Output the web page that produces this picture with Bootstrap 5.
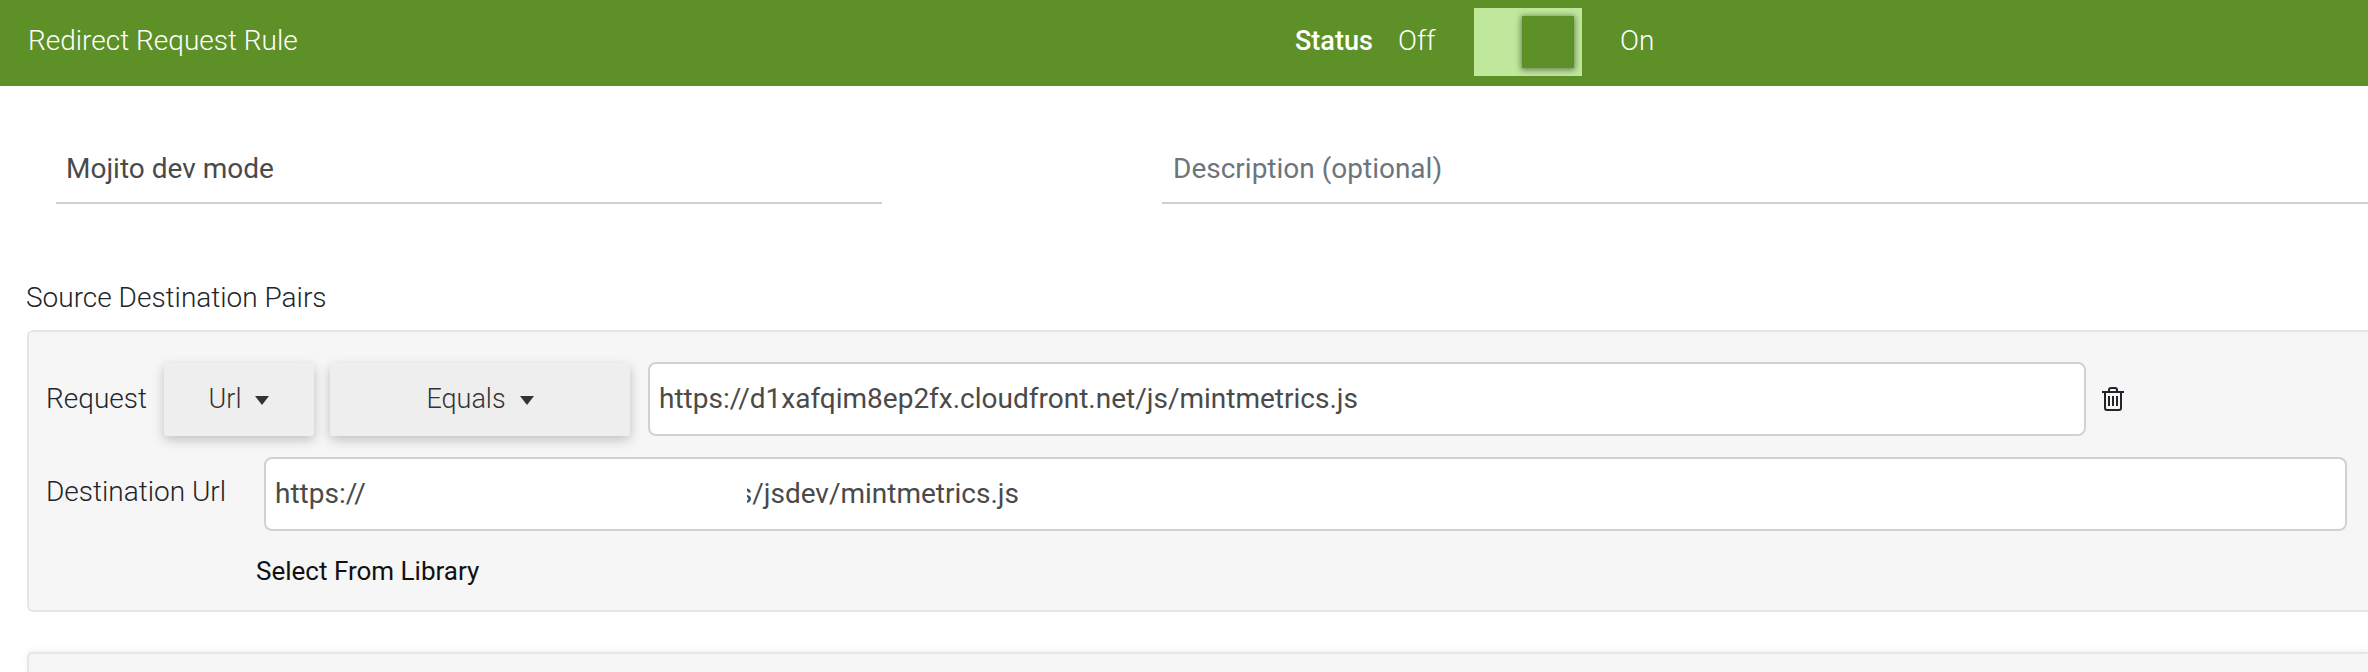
<!DOCTYPE html>
<html lang="en">
<head>
<meta charset="utf-8">
<title>Redirect Request Rule</title>
<link href="https://cdn.jsdelivr.net/npm/bootstrap@5.3.0/dist/css/bootstrap.min.css" rel="stylesheet">
<style>
html,body{height:100%;overflow:hidden}
body{font-family:Roboto,"Liberation Sans",sans-serif;background:#fff;color:#212529}
.rule-head{height:86px;background:#5e9028;color:#fff;padding:0 0 4px 28px;font-size:28px;font-weight:300}
.rule-title{width:1267px}
.rule-status{font-weight:500;width:103px;font-size:27px}
.rule-off{font-weight:300;width:76px}
.rule-on{font-weight:300;margin-left:38px}
.rule-toggle{width:108px;height:68px;background:#c0e89c;padding:8px;margin-top:2px}
.rule-knob{width:52px;height:52px;background:#5e9028;box-shadow:0 1px 6px 1px rgba(0,0,0,.45)}
.name-row{margin-top:44px;margin-left:56px}
.line-input.form-control{height:74px;border:0;border-bottom:2px solid #d0d0d2;border-radius:0;background:transparent;font-size:28px;padding:4px 10px 0;color:#4a4a4a;box-shadow:none}
.line-input::placeholder{color:#6c757d;opacity:1}
.line-name{width:826px;flex:none}
.line-desc.form-control{flex:1 1 0;width:auto;margin-left:280px;padding-left:11px}
.pairs-label{margin:74px 0 0 26px;font-size:28px;font-weight:300;line-height:39px}
.pair-card{margin:13px 0 0 27px;height:282px;background:#f6f6f6;border:2px solid #e6e6e6;border-right:0;border-radius:6px 0 0 6px;padding:29px 21px 0 17px;font-weight:300;font-size:28px}
.pair-label-a{width:118px;flex:none}
.pair-label-b{width:218px;flex:none;margin-bottom:4px}
.pair-btn.btn{height:73px;margin-top:2px;background:#eee;border:0;border-radius:3px;color:#333;font-size:27px;font-weight:300;box-shadow:0 4px 12px rgba(0,0,0,.22);padding:0}
.pair-btn.dropdown-toggle::after{margin-left:14px;border-top-width:9px;border-left-width:7px;border-right-width:7px;vertical-align:3px}
.pair-url{width:150px;flex:none}
.pair-op{width:300px;flex:none;margin-left:16px}
.pair-input.form-control{height:74px;border:2px solid #d0d1d6;border-radius:8px;background:#fff;font-size:28px;font-weight:400;color:#4a4a4a;padding:0 9px;box-shadow:none}
.pair-input-a{margin-left:18px}
.pair-trash{width:22px;flex:none;margin:0 223px 0 16px;color:#212529}
.pair-row2{margin-top:21px}
.lib-row{margin:21px 0 0 210px;font-weight:400;line-height:39px;color:#111;font-size:26px}
.dest-gap{width:372px;flex:none}
.dest-tail{position:relative;white-space:nowrap}
.dest-tail::before{content:"";position:absolute;left:-1px;top:0;bottom:0;width:10px;background:#fff}
.pair-next{margin:40px 0 0 27px;height:20px;background:#f6f6f6;border:2px solid #e6e6e6;border-width:2px 0 0 2px;border-radius:6px 0 0 0;box-shadow:0 -2px 6px rgba(0,0,0,.06)}
</style>
</head>
<body>
<header class="rule-head d-flex align-items-center">
  <div class="rule-title">Redirect Request Rule</div>
  <div class="rule-status">Status</div>
  <div class="rule-off">Off</div>
  <div class="rule-toggle d-flex justify-content-end"><div class="rule-knob"></div></div>
  <div class="rule-on">On</div>
</header>
<div class="name-row d-flex">
  <input class="form-control line-input line-name" type="text" value="Mojito dev mode" aria-label="Name">
  <input class="form-control line-input line-desc" type="text" placeholder="Description (optional)" aria-label="Description">
</div>
<div class="pairs-label">Source Destination Pairs</div>
<section class="pair-card">
  <div class="d-flex align-items-center">
    <div class="pair-label-a">Request</div>
    <button class="btn dropdown-toggle pair-btn pair-url" type="button">Url</button>
    <button class="btn dropdown-toggle pair-btn pair-op" type="button">Equals</button>
    <input class="form-control pair-input pair-input-a" type="text" value="https://d1xafqim8ep2fx.cloudfront.net/js/mintmetrics.js" aria-label="Request">
    <svg class="pair-trash" viewBox="0 0 22 24" height="24" fill="none" stroke="currentColor" stroke-width="2" aria-hidden="true">
      <path d="M0 5h22"/>
      <path d="M7 5V3a2 2 0 0 1 2-2h4a2 2 0 0 1 2 2v2"/>
      <path d="M3 5v16a2 2 0 0 0 2 2h12a2 2 0 0 0 2-2V5"/>
      <path d="M7 9v10M11 9v10M15 9v10"/>
    </svg>
  </div>
  <div class="d-flex align-items-center pair-row2">
    <div class="pair-label-b">Destination Url</div>
    <div class="form-control pair-input d-flex align-items-center">
      <span>https://</span><span class="dest-gap"></span><span class="dest-tail">s/jsdev/mintmetrics.js</span>
    </div>
  </div>
  <div class="lib-row">Select From Library</div>
</section>
<section class="pair-next"></section>
<script src="https://cdn.jsdelivr.net/npm/bootstrap@5.3.0/dist/js/bootstrap.bundle.min.js"></script>
</body>
</html>
